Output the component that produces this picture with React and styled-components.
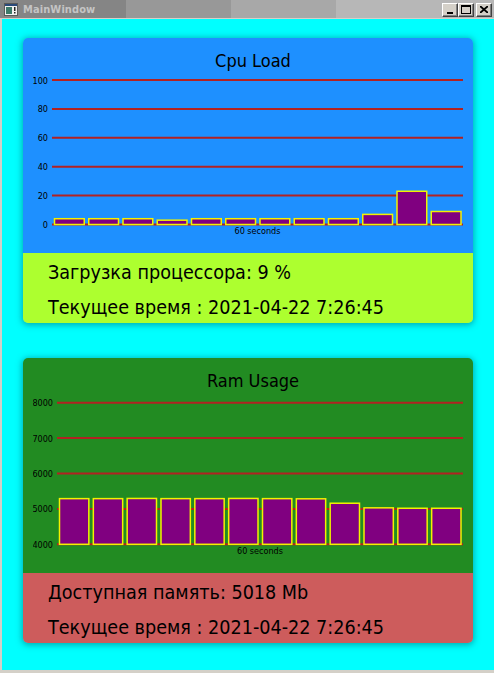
import React from 'react';
import styled, { createGlobalStyle } from 'styled-components';

const GlobalStyle = createGlobalStyle`
  html, body {
    margin: 0;
    padding: 0;
    background: #d4d0c8;
  }
  body {
    font-family: "DejaVu Sans Condensed", "DejaVu Sans", sans-serif;
    font-stretch: condensed;
  }
`;

const Window = styled.div`
  width: 494px;
  height: 673px;
  display: flex;
  flex-direction: column;
  overflow: hidden;
`;

const TitleBar = styled.div`
  height: 18px;
  flex: none;
  display: flex;
  align-items: center;
  padding: 0 2px 0 4px;
  background: linear-gradient(
    to right,
    #858585 0 126px,
    #989898 126px 231px,
    #a8a8a8 231px 336px,
    #b7b7b7 336px
  );
`;

const TitleText = styled.span`
  margin-left: 5px;
  flex: 1;
  font-size: 11px;
  font-weight: bold;
  color: #c4c4c4;
  letter-spacing: 0.1px;
`;

const CaptionButtons = styled.div`
  display: flex;
  gap: 0;
  margin-top: 1px;
`;

const CaptionButton = styled.div`
  width: 16px;
  height: 14px;
  box-sizing: border-box;
  margin-left: ${(p) => (p.$gap ? '2px' : '0')};
  background: #d4d0c8;
  border-top: 1px solid #ffffff;
  border-left: 1px solid #ffffff;
  border-right: 1px solid #404040;
  border-bottom: 1px solid #404040;
  box-shadow: inset -1px -1px 0 #808080;
  display: flex;
  align-items: center;
  justify-content: center;
`;

const ClientArea = styled.div`
  flex: 1;
  background: #00ffff;
  border-top: 1px solid #d4d0c8;
  border-left: 2px solid #d4d0c8;
  border-bottom: 3px solid #d4d0c8;
  padding: 19px 21px 0 21px;
  display: flex;
  flex-direction: column;
  gap: 35px;
`;

const Card = styled.section`
  width: 450px;
  height: 285px;
  border-radius: 5px;
  overflow: hidden;
  display: flex;
  flex-direction: column;
  box-shadow: 0 1px 6px 1px rgba(0, 90, 100, 0.5);
`;

const ChartPanel = styled.div`
  height: 215px;
  flex: none;
  background: ${(p) => p.$bg};
  display: flex;
  flex-direction: column;
`;

const ChartTitle = styled.h2`
  margin: 0;
  padding: 12px 0 0 10px;
  height: 22px;
  line-height: 22px;
  text-align: center;
  font-size: 18px;
  font-weight: normal;
  color: #000;
`;

const Plot = styled.svg`
  display: block;
  margin: 0 10px;
  font-family: "DejaVu Sans Condensed", "DejaVu Sans", sans-serif;
`;

const InfoPanel = styled.div`
  flex: 1;
  background: ${(p) => p.$bg};
  padding: 2px 25px 0;
`;

const InfoLine = styled.div`
  height: 35px;
  line-height: 35px;
  font-size: 19.6px;
  color: #000;
  white-space: nowrap;
`;

const AppIcon = () => (
  <svg width="14" height="13" viewBox="0 0 14 13">
    <rect x="0.5" y="0.5" width="13" height="12" fill="#f0f0f0" stroke="#5a5a5a" />
    <rect x="1" y="1" width="12" height="2" fill="#2a4a7a" />
    <rect x="2" y="4" width="6" height="7" fill="#3c7a6a" />
    <rect x="10" y="4" width="1.5" height="4" fill="#222" />
    <rect x="10" y="9" width="1.5" height="1.5" fill="#222" />
  </svg>
);

const Chart = ({ ticks, min, max, top, bottom, labelRight, values }) => {
  const width = 430;
  const plotLeft = labelRight + 4;
  const plotW = width - plotLeft;
  const slot = plotW / values.length;
  const yOf = (v) => bottom - ((v - min) / (max - min)) * (bottom - top);

  return (
    <Plot width={width} height={181} viewBox={`0 0 ${width} 181`}>
      {ticks.map((t) => (
        <g key={t}>
          <line x1={plotLeft} x2={width} y1={yOf(t)} y2={yOf(t)} stroke="#b22222" strokeWidth="2" />
          <text x={labelRight} y={yOf(t) + 3.5} fontSize="9" textAnchor="end" fill="#000">
            {t}
          </text>
        </g>
      ))}
      {values.map((v, i) => (
        <rect
          key={i}
          x={plotLeft + i * slot + 2.5}
          y={yOf(v)}
          width={slot - 4.5}
          height={bottom - yOf(v)}
          fill="#800080"
          stroke="#f2f200"
          strokeWidth="1.5"
        />
      ))}
      <text x={plotLeft + plotW / 2} y={162} fontSize="9" textAnchor="middle" fill="#000">
        60 seconds
      </text>
    </Plot>
  );
};

const cpu = {
  title: 'Cpu Load',
  bg: '#1e90ff',
  infoBg: '#adff2f',
  ticks: [0, 20, 40, 60, 80, 100],
  min: 0,
  max: 100,
  top: 8,
  bottom: 152.5,
  labelRight: 15,
  values: [4, 4, 4, 3, 4, 4, 4, 4, 4, 7, 23, 9],
  info: 'Загрузка процессора: 9 %',
};

const ram = {
  title: 'Ram Usage',
  bg: '#228b22',
  infoBg: '#cd5c5c',
  ticks: [4000, 5000, 6000, 7000, 8000],
  min: 4000,
  max: 8000,
  top: 10.7,
  bottom: 152.3,
  labelRight: 20,
  values: [5290, 5290, 5295, 5290, 5290, 5295, 5290, 5285, 5160, 5030, 5018, 5018],
  info: 'Доступная память: 5018 Mb',
};

const time = '2021-04-22 7:26:45';

const MonitorCard = ({ data }) => (
  <Card>
    <ChartPanel $bg={data.bg}>
      <ChartTitle>{data.title}</ChartTitle>
      <Chart
        ticks={data.ticks}
        min={data.min}
        max={data.max}
        top={data.top}
        bottom={data.bottom}
        labelRight={data.labelRight}
        values={data.values}
      />
    </ChartPanel>
    <InfoPanel $bg={data.infoBg}>
      <InfoLine>{data.info}</InfoLine>
      <InfoLine>Текущее время : {time}</InfoLine>
    </InfoPanel>
  </Card>
);

export default function App() {
  return (
    <Window>
      <GlobalStyle />
      <TitleBar>
        <AppIcon />
        <TitleText>MainWindow</TitleText>
        <CaptionButtons>
          <CaptionButton>
            <svg width="8" height="8" viewBox="0 0 8 8"><rect x="1" y="6" width="6" height="2" fill="#000" /></svg>
          </CaptionButton>
          <CaptionButton>
            <svg width="10" height="9" viewBox="0 0 10 9">
              <rect x="0.5" y="0.5" width="9" height="8" fill="none" stroke="#000" />
              <rect x="0" y="0" width="10" height="2" fill="#000" />
            </svg>
          </CaptionButton>
          <CaptionButton $gap>
            <svg width="8" height="7" viewBox="0 0 8 7">
              <path d="M0 0 L8 7 M8 0 L0 7" stroke="#000" strokeWidth="1.8" />
            </svg>
          </CaptionButton>
        </CaptionButtons>
      </TitleBar>
      <ClientArea>
        <MonitorCard data={cpu} />
        <MonitorCard data={ram} />
      </ClientArea>
    </Window>
  );
}
